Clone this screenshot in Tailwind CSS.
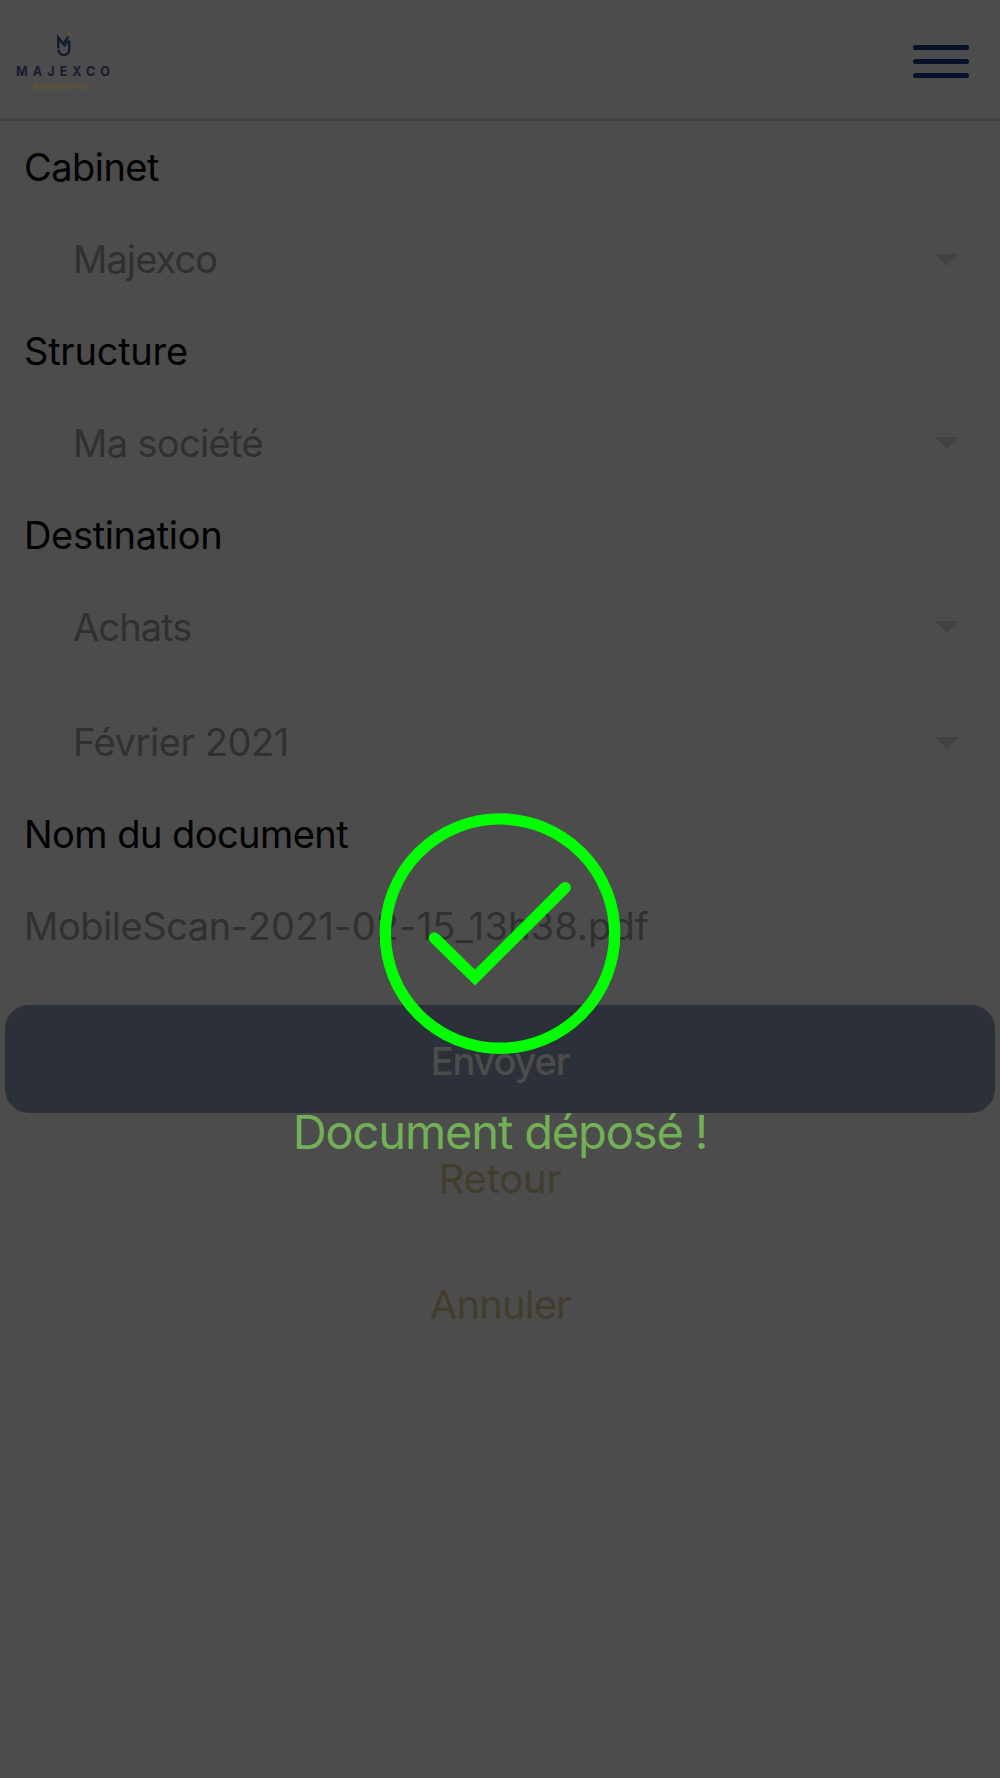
<!DOCTYPE html>
<html lang="fr">
<head>
<meta charset="utf-8">
<title>Majexco</title>
<script src="https://cdn.jsdelivr.net/npm/@tailwindcss/browser@4"></script>
</head>
<body class="bg-[#4c4c4c]">
<div class="relative w-[1000px] h-[1778px] overflow-hidden bg-[#4c4c4c] font-[Inter,sans-serif] text-[38px] text-black whitespace-nowrap">
  <header class="h-[121px] border-b-[3px] border-[#404040] flex justify-between items-start pl-4 pr-[31px]">
    <div class="w-[95px] pt-[31px] flex flex-col items-center">
      <svg class="w-[18px] h-[26px]" viewBox="0 0 18 26" fill="none" stroke="#101a30" stroke-width="2.4">
        <path d="M3.3 17.3V6.5L8.2 13L13.4 5.6"/>
        <path d="M14.3 9.5V18.5A5.2 5.2 0 0 1 3.4 18.8"/>
        <path d="M8.8 15.6L14 9.6" stroke-width="1.8"/>
        <circle cx="14" cy="2.6" r="1.5" fill="#6b5029" stroke="none"/>
      </svg>
      <svg class="w-[95px] h-[36px] overflow-visible" viewBox="0 0 95 36">
        <text x="0" y="18.6" textLength="94" font-size="12.5" font-weight="700" fill="#151b33">MAJEXCO</text>
        <text x="18" y="32" textLength="57.5" font-size="6.5" font-weight="700" class="font-[Lato,sans-serif] [font-variant:small-caps]" fill="#6b5530">Expertise Comptable</text>
      </svg>
    </div>
    <div class="w-14 pt-[45px] flex flex-col gap-[9px]">
      <span class="h-[5px] rounded-full bg-[#06122a]"></span>
      <span class="h-[5px] rounded-full bg-[#06122a]"></span>
      <span class="h-[5px] rounded-full bg-[#06122a]"></span>
    </div>
  </header>
  <main>
    <div class="h-[92px] pt-px pl-6 flex items-center tracking-[-0.53px]">Cabinet</div>
    <div class="h-[92px] pt-px pl-[73px] pr-[41px] flex items-center justify-between text-[#303030] tracking-[-0.9px]">Majexco
      <svg class="w-6 h-3" viewBox="0 0 24 12"><path d="M0 0H24L12 12Z" fill="#424242"/></svg></div>
    <div class="h-[92px] pl-6 flex items-center tracking-[-0.23px]">Structure</div>
    <div class="h-[92px] pl-[73px] pr-[41px] flex items-center justify-between text-[#303030] tracking-[-0.65px]">Ma société
      <svg class="w-6 h-3" viewBox="0 0 24 12"><path d="M0 0H24L12 12Z" fill="#424242"/></svg></div>
    <div class="h-[92px] pl-6 flex items-center tracking-[-0.33px]">Destination</div>
    <div class="h-[92px] pl-[73px] pr-[41px] flex items-center justify-between text-[#303030] tracking-[-0.9px]">Achats
      <svg class="w-6 h-3" viewBox="0 0 24 12"><path d="M0 0H24L12 12Z" fill="#424242"/></svg></div>
    <div class="mt-[23px] h-[92px] pt-px pl-[73px] pr-[41px] flex items-center justify-between text-[#303030] tracking-[-0.4px]">Février 2021
      <svg class="w-6 h-3" viewBox="0 0 24 12"><path d="M0 0H24L12 12Z" fill="#424242"/></svg></div>
    <div class="h-[92px] pl-6 flex items-center tracking-[-0.55px]">Nom du document</div>
    <div class="h-[92px] pl-6 flex items-center text-[#303030] tracking-[0.13px]"><span class="tracking-[-0.45px]">MobileScan-</span>2021-02-15_13h38.pdf</div>
    <div class="mt-[33px] mx-[5px] h-[108px] rounded-3xl bg-[#2c3038] pt-[5px] flex items-center justify-center font-medium text-[#4c4c4c] tracking-[-1.16px]">Envoyer</div>
    <div class="mt-[3px] h-[126px] flex items-center justify-center text-[40px] text-[#433c2d] tracking-[-0.16px]">Retour</div>
    <div class="h-[126px] flex items-center justify-center text-[40px] text-[#433c2d] tracking-[-0.84px]">Annuler</div>
  </main>
  <!-- Success overlay -->
  <div class="absolute inset-0 pt-[812px] flex flex-col items-center">
    <svg class="w-[242px] h-[242px] shrink-0" viewBox="0 0 242 242" fill="none" stroke="#00ff00" stroke-width="11.4">
      <circle cx="121" cy="121.6" r="114.7"/>
      <path d="M55.4 125.9L95.9 165.5L186.2 75.6" stroke-linecap="round"/>
    </svg>
    <div class="mt-[48px] h-[60px] leading-[60px] text-[47px] text-[#72b055] tracking-[-1.14px]">Document déposé !</div>
  </div>
</div>
</body>
</html>
